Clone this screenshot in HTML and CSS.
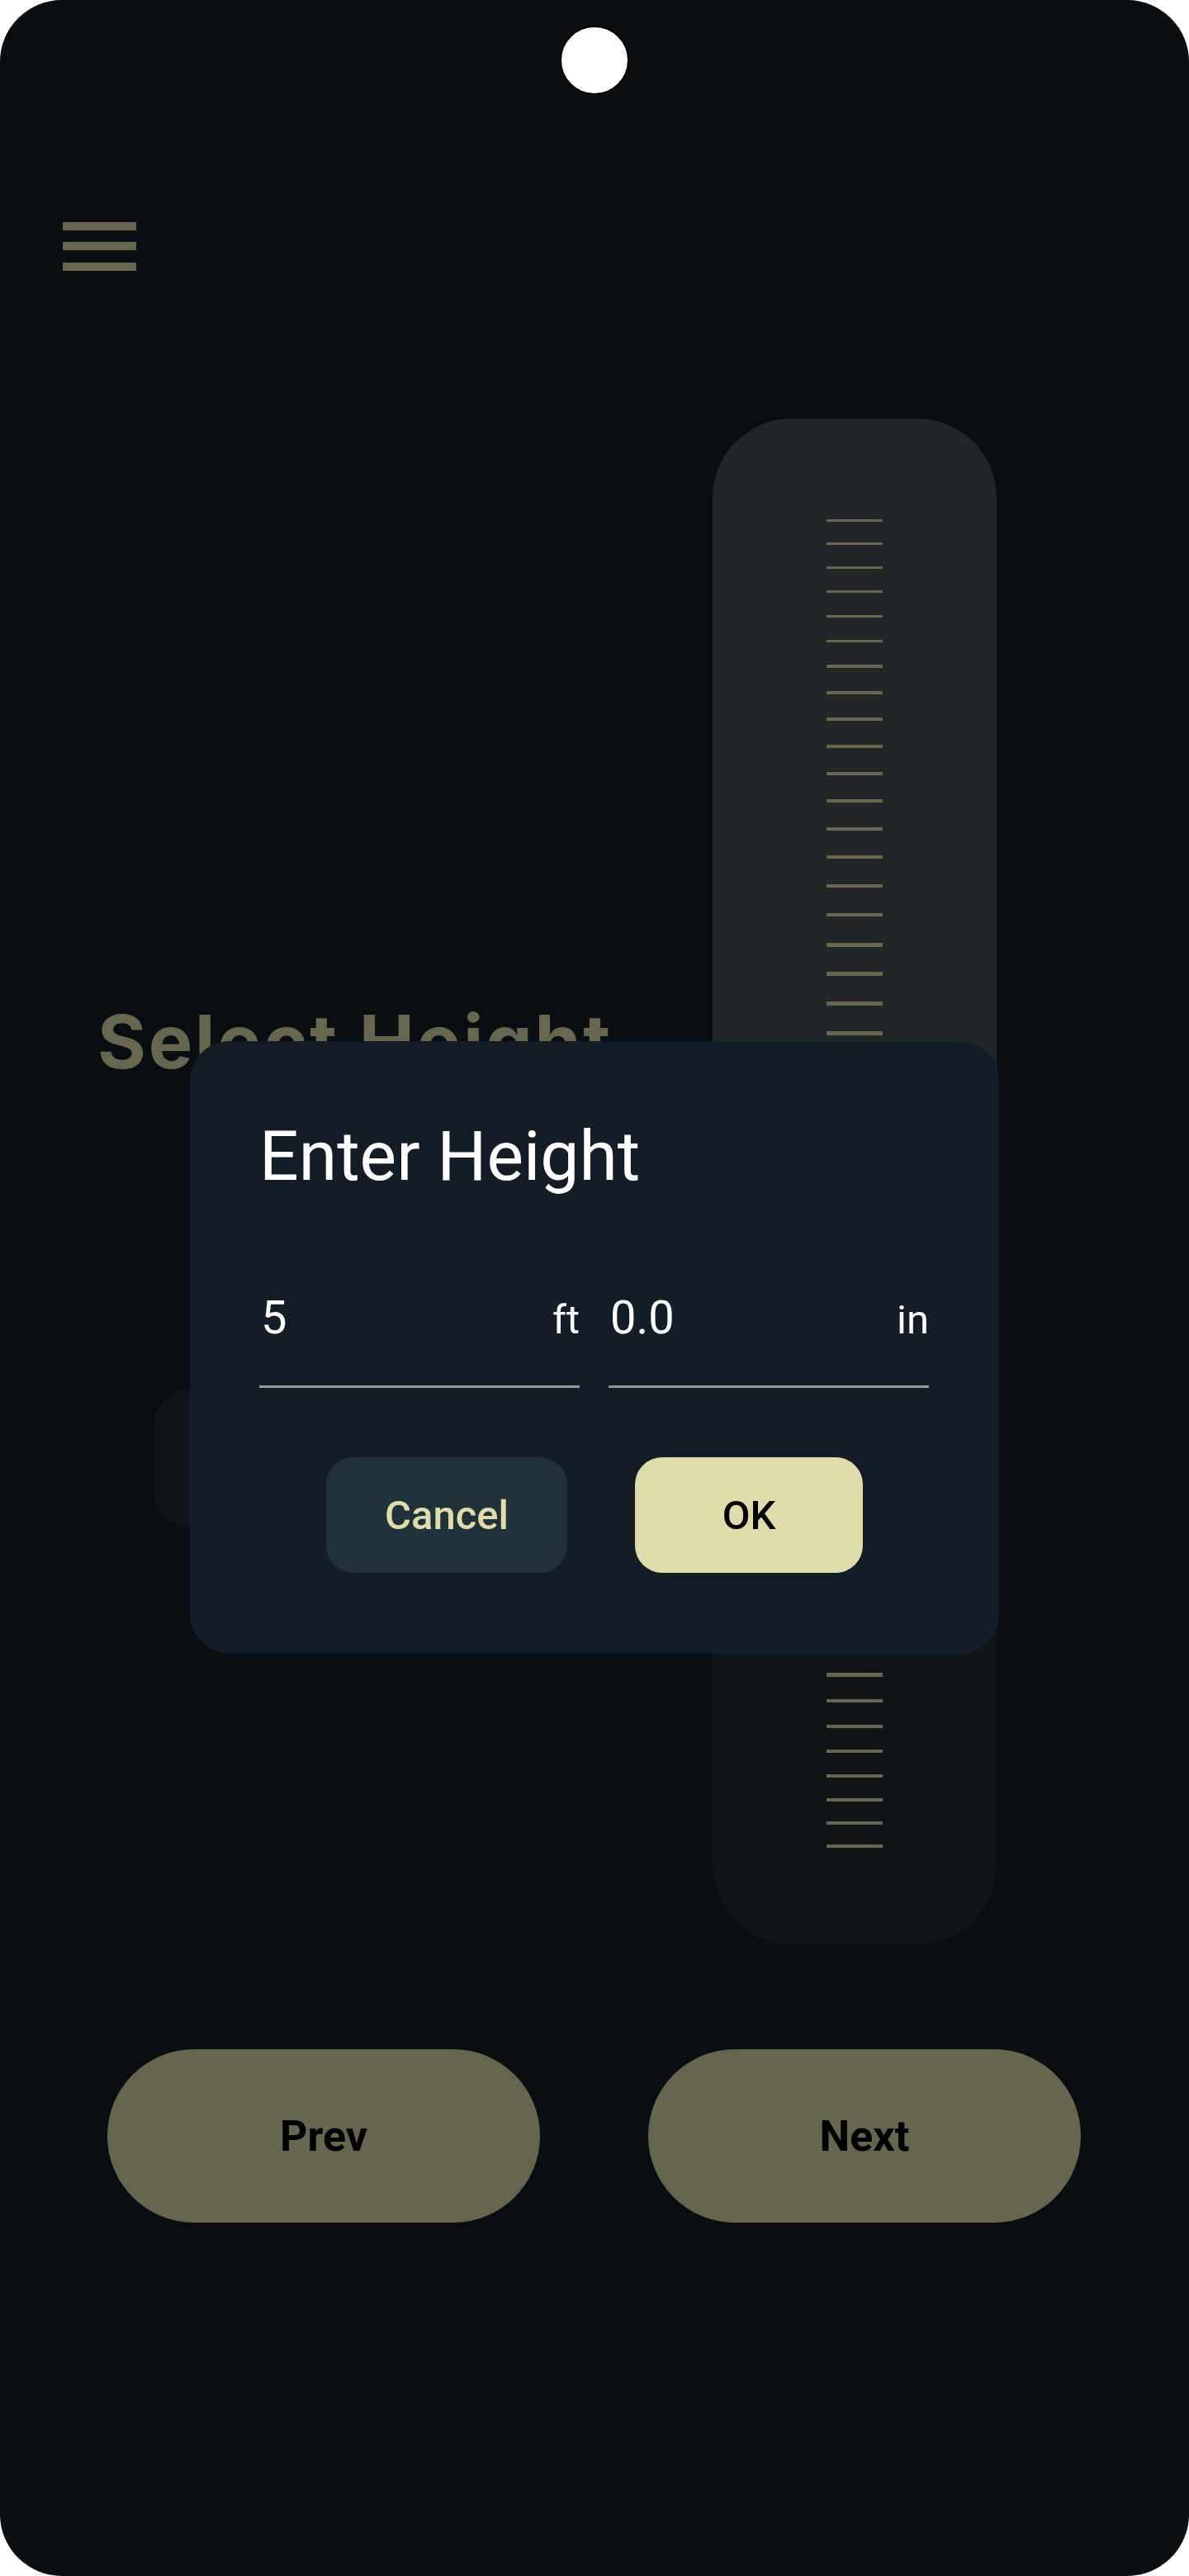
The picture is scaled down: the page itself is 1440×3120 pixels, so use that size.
FILE: index.html
```html
<!DOCTYPE html>
<html lang="en">
<head>
<meta charset="utf-8">
<title>Select Height</title>
<link rel="stylesheet" href="styles.css">
</head>
<body>
<div class="device">
  <div class="camera-row"><div class="camera"></div></div>
  <div class="menu" aria-label="Menu">
    <span class="bar"></span><span class="bar b2"></span><span class="bar b3"></span>
  </div>

  <div class="main">
    <div class="left-col">
      <h1 class="page-title">Select Height</h1>
      <div class="value-box"></div>
    </div>
    <div class="track">
      <div class="ticks">
        <div class="row" style="height:28px"><i class="tk t3"></i></div>
        <div class="row" style="height:29px"><i class="tk t3"></i></div>
        <div class="row" style="height:29px"><i class="tk t3"></i></div>
        <div class="row" style="height:30px"><i class="tk t3"></i></div>
        <div class="row" style="height:30px"><i class="tk t3"></i></div>
        <div class="row" style="height:30px"><i class="tk t3"></i></div>
        <div class="row" style="height:32px"><i class="tk t4"></i></div>
        <div class="row" style="height:32px"><i class="tk t4"></i></div>
        <div class="row" style="height:33px"><i class="tk t4"></i></div>
        <div class="row" style="height:33px"><i class="tk t4"></i></div>
        <div class="row" style="height:33px"><i class="tk t4"></i></div>
        <div class="row" style="height:34px"><i class="tk t4"></i></div>
        <div class="row" style="height:34px"><i class="tk t4"></i></div>
        <div class="row" style="height:35px"><i class="tk t4"></i></div>
        <div class="row" style="height:35px"><i class="tk t4"></i></div>
        <div class="row" style="height:36px"><i class="tk t4"></i></div>
        <div class="row" style="height:35px"><i class="tk t5"></i></div>
        <div class="row" style="height:36px"><i class="tk t5"></i></div>
        <div class="row" style="height:36px"><i class="tk t5"></i></div>
        <div class="row" style="height:36px"><i class="tk t5"></i></div>
        <div class="row" style="height:36px"><i class="tk t5"></i></div>
        <div class="row" style="height:37px"><i class="tk t5"></i></div>
        <div class="row" style="height:37px"><i class="tk t5"></i></div>
        <div class="row" style="height:37px"><i class="tk t5"></i></div>
        <div class="row" style="height:37px"><i class="tk t5"></i></div>
        <div class="row" style="height:37px"><i class="tk t5"></i></div>
        <div class="row" style="height:37px"><i class="tk t5"></i></div>
        <div class="row" style="height:36px"><i class="tk t5"></i></div>
        <div class="row" style="height:36px"><i class="tk t5"></i></div>
        <div class="row" style="height:36px"><i class="tk t5"></i></div>
        <div class="row" style="height:36px"><i class="tk t5"></i></div>
        <div class="row" style="height:35px"><i class="tk t5"></i></div>
        <div class="row" style="height:35px"><i class="tk t5"></i></div>
        <div class="row" style="height:35px"><i class="tk t5"></i></div>
        <div class="row" style="height:35px"><i class="tk t5"></i></div>
        <div class="row" style="height:34px"><i class="tk t5"></i></div>
        <div class="row" style="height:34px"><i class="tk t5"></i></div>
        <div class="row" style="height:34px"><i class="tk t5"></i></div>
        <div class="row" style="height:33px"><i class="tk t5"></i></div>
        <div class="row" style="height:32px"><i class="tk t5"></i></div>
        <div class="row" style="height:32px"><i class="tk t5"></i></div>
        <div class="row" style="height:32px"><i class="tk t5"></i></div>
        <div class="row" style="height:31px"><i class="tk t4"></i></div>
        <div class="row" style="height:30px"><i class="tk t4"></i></div>
        <div class="row" style="height:30px"><i class="tk t4"></i></div>
        <div class="row" style="height:29px"><i class="tk t4"></i></div>
        <div class="row" style="height:28px"><i class="tk t4"></i></div>
        <div class="row" style="height:28px"><i class="tk t4"></i></div>
        <div class="row" style="height:4px"><i class="tk t4"></i></div>
      </div>
    </div>
  </div>

  <div class="nav">
    <button class="nav-btn">Prev</button>
    <button class="nav-btn">Next</button>
  </div>

  <div class="dialog" role="dialog" aria-label="Enter Height">
    <h2 class="dialog-title">Enter Height</h2>
    <div class="fields">
      <div class="field"><span class="val">5</span><span class="unit">ft</span></div>
      <div class="field"><span class="val">0.0</span><span class="unit">in</span></div>
    </div>
    <div class="actions">
      <button class="btn btn-cancel">Cancel</button>
      <button class="btn btn-ok">OK</button>
    </div>
  </div>
</div>
</body>
</html>
```

FILE: styles.css
```css
* { box-sizing: border-box; }

html, body {
  margin: 0;
  padding: 0;
  background: #ffffff;
}

.device {
  position: relative;
  width: 1440px;
  height: 3120px;
  background: #090e12;
  border-radius: 75px;
  overflow: hidden;
  font-family: Roboto, "Liberation Sans", sans-serif;
}

.camera-row {
  display: flex;
  justify-content: center;
  padding-top: 31px;
}

.camera {
  width: 84px;
  height: 84px;
  border-radius: 50%;
  background: #ffffff;
  border: 2px solid #000000;
}

.menu {
  display: flex;
  flex-direction: column;
  margin: 154px 0 0 76px;
  width: 89px;
}

.bar {
  display: block;
  height: 10px;
  background: #67664f;
}
.b2 { margin-top: 14px; }
.b3 { margin-top: 15px; }

.main {
  display: flex;
  margin-top: 179px;
  height: 1848px;
}

.left-col {
  width: 863px;
  display: flex;
  flex-direction: column;
}

.page-title {
  margin: 710px 0 0 118px;
  font-family: Inter, "Noto Sans", sans-serif;
  font-weight: 700;
  font-size: 90px;
  line-height: 90px;
  letter-spacing: 2.7px;
  color: #67664f;
  white-space: nowrap;
}

.value-box {
  margin: 376px 0 0 186px;
  width: 560px;
  height: 168px;
  border-radius: 44px;
  background: #0f1518;
}

.track {
  width: 344px;
  border-radius: 96px;
  background: linear-gradient(to bottom, #212629 0, #212629 1100px, #0f1518 1100px, #0f1518 100%);
  padding-top: 122px;
}

.ticks {
  display: flex;
  flex-direction: column;
  align-items: center;
}

.row {
  width: 68px;
  flex: none;
}

.tk {
  display: block;
  width: 68px;
  background: #67664f;
}
.t3 { height: 3px; }
.t4 { height: 4px; }
.t5 { height: 5px; }

.nav {
  display: flex;
  gap: 131px;
  margin-top: 127px;
  padding-left: 130px;
}

.nav-btn {
  width: 524px;
  height: 210px;
  border: none;
  border-radius: 105px;
  background: #66654e;
  color: #000000;
  font-family: Roboto, "Liberation Sans", sans-serif;
  font-weight: 700;
  font-size: 52px;
  padding: 0;
}

.dialog {
  position: absolute;
  left: 230px;
  top: 1261px;
  width: 980px;
  height: 742px;
  background: #141d25;
  border-radius: 48px;
  padding: 98px 84px 98px 84px;
}

.dialog-title {
  margin: 0;
  font-family: Roboto, "Liberation Sans", sans-serif;
  font-weight: 400;
  font-size: 84px;
  line-height: 84px;
  color: #ffffff;
  white-space: nowrap;
}

.fields {
  display: flex;
  gap: 35px;
  margin-top: 125px;
}

.field {
  width: 388px;
  display: flex;
  align-items: baseline;
  justify-content: space-between;
  padding-bottom: 54px;
  border-bottom: 3px solid #9a9a9a;
  color: #ffffff;
}

.val {
  font-size: 56px;
  line-height: 56px;
  padding-left: 2px;
}

.unit {
  font-size: 49px;
  line-height: 49px;
}

.actions {
  display: flex;
  justify-content: center;
  gap: 82px;
  margin-top: 84px;
}

.btn {
  height: 140px;
  border: none;
  border-radius: 33px;
  font-family: Roboto, "Liberation Sans", sans-serif;
  font-weight: 500;
  font-size: 49px;
  padding: 0;
}

.btn-cancel {
  width: 292px;
  background: #203239;
  color: #e0dcab;
}

.btn-ok {
  width: 276px;
  background: #dfdcab;
  color: #000000;
}
```
